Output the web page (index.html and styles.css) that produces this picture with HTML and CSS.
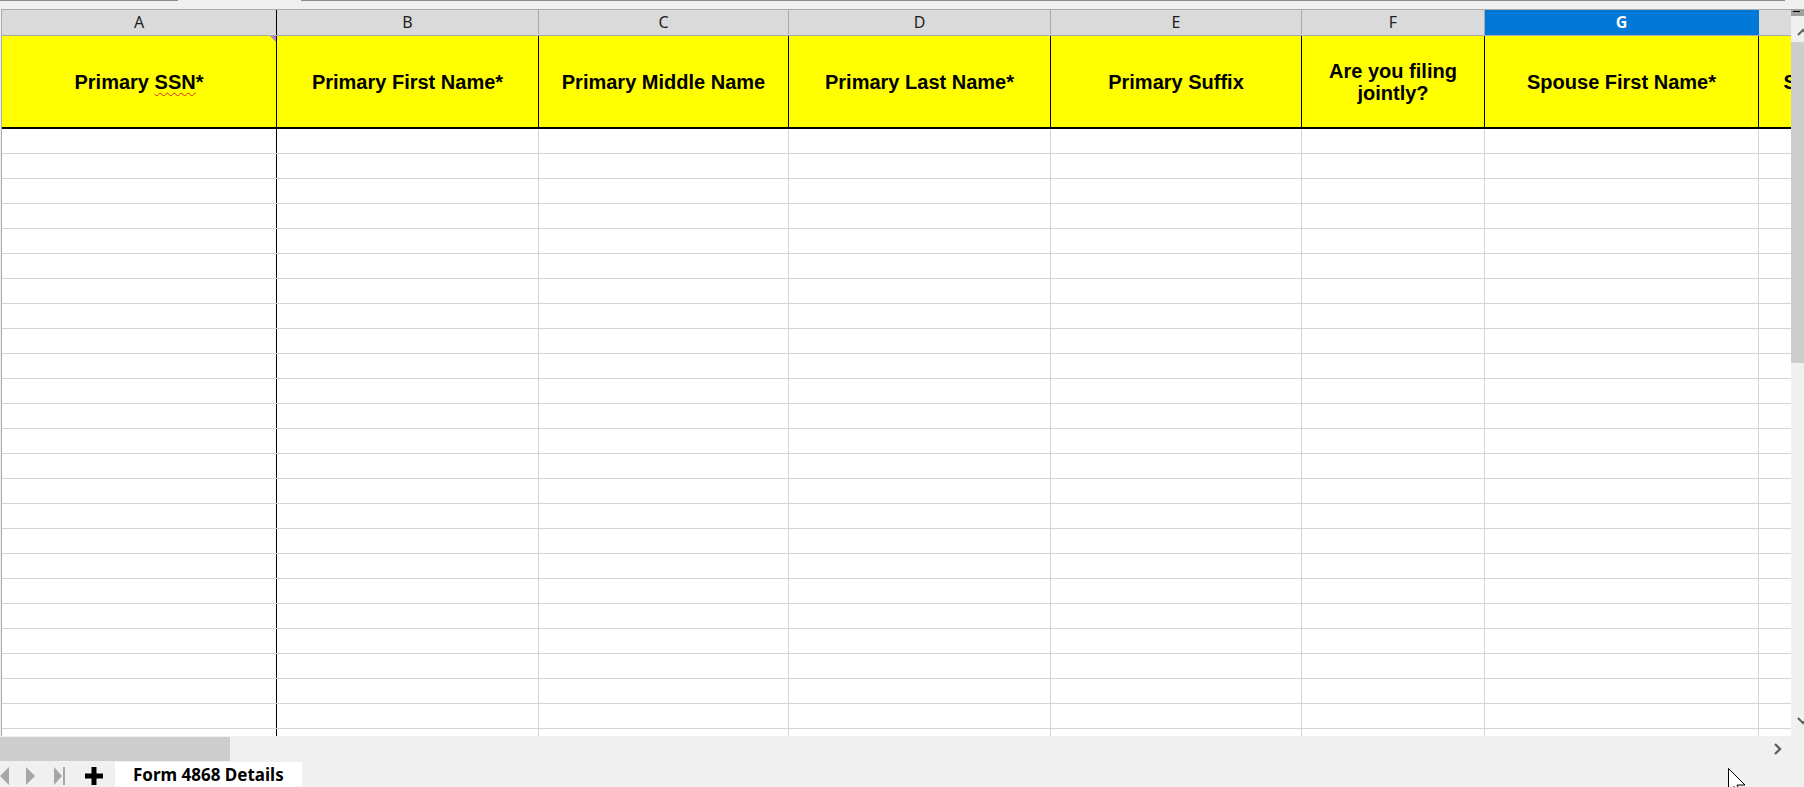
FILE: index.html
```html
<!DOCTYPE html>
<html lang="en">
<head>
<meta charset="utf-8">
<title>Form 4868 Details</title>
<link rel="stylesheet" href="styles.css">
</head>
<body>
<div class="app">
  <div class="topstrip">
    <span class="edge edge-a"></span>
    <span class="edge-gap"></span>
    <span class="edge edge-b"></span>
  </div>

  <div class="main">
    <div class="sheet">
      <div class="colheads cols">
        <span class="frozen">A</span>
        <span>B</span>
        <span>C</span>
        <span>D</span>
        <span>E</span>
        <span>F</span>
        <span class="selected">G</span>
        <span class="last"></span>
      </div>

      <div class="titles cols">
        <div class="title frozen has-note"><span class="label">Primary <span class="misspelled">SSN</span>*</span></div>
        <div class="title"><span class="label">Primary First Name*</span></div>
        <div class="title"><span class="label">Primary Middle Name</span></div>
        <div class="title"><span class="label">Primary Last Name*</span></div>
        <div class="title"><span class="label">Primary Suffix</span></div>
        <div class="title"><span class="label">Are you filing jointly?</span></div>
        <div class="title"><span class="label">Spouse First Name*</span></div>
        <div class="title last"><span class="label clip">Spouse Middle Name</span></div>
      </div>

      <div class="rows">
        <div class="row cols"><i class="frozen"></i><i></i><i></i><i></i><i></i><i></i><i></i><i></i></div>
        <div class="row cols"><i class="frozen"></i><i></i><i></i><i></i><i></i><i></i><i></i><i></i></div>
        <div class="row cols"><i class="frozen"></i><i></i><i></i><i></i><i></i><i></i><i></i><i></i></div>
        <div class="row cols"><i class="frozen"></i><i></i><i></i><i></i><i></i><i></i><i></i><i></i></div>
        <div class="row cols"><i class="frozen"></i><i></i><i></i><i></i><i></i><i></i><i></i><i></i></div>
        <div class="row cols"><i class="frozen"></i><i></i><i></i><i></i><i></i><i></i><i></i><i></i></div>
        <div class="row cols"><i class="frozen"></i><i></i><i></i><i></i><i></i><i></i><i></i><i></i></div>
        <div class="row cols"><i class="frozen"></i><i></i><i></i><i></i><i></i><i></i><i></i><i></i></div>
        <div class="row cols"><i class="frozen"></i><i></i><i></i><i></i><i></i><i></i><i></i><i></i></div>
        <div class="row cols"><i class="frozen"></i><i></i><i></i><i></i><i></i><i></i><i></i><i></i></div>
        <div class="row cols"><i class="frozen"></i><i></i><i></i><i></i><i></i><i></i><i></i><i></i></div>
        <div class="row cols"><i class="frozen"></i><i></i><i></i><i></i><i></i><i></i><i></i><i></i></div>
        <div class="row cols"><i class="frozen"></i><i></i><i></i><i></i><i></i><i></i><i></i><i></i></div>
        <div class="row cols"><i class="frozen"></i><i></i><i></i><i></i><i></i><i></i><i></i><i></i></div>
        <div class="row cols"><i class="frozen"></i><i></i><i></i><i></i><i></i><i></i><i></i><i></i></div>
        <div class="row cols"><i class="frozen"></i><i></i><i></i><i></i><i></i><i></i><i></i><i></i></div>
        <div class="row cols"><i class="frozen"></i><i></i><i></i><i></i><i></i><i></i><i></i><i></i></div>
        <div class="row cols"><i class="frozen"></i><i></i><i></i><i></i><i></i><i></i><i></i><i></i></div>
        <div class="row cols"><i class="frozen"></i><i></i><i></i><i></i><i></i><i></i><i></i><i></i></div>
        <div class="row cols"><i class="frozen"></i><i></i><i></i><i></i><i></i><i></i><i></i><i></i></div>
        <div class="row cols"><i class="frozen"></i><i></i><i></i><i></i><i></i><i></i><i></i><i></i></div>
        <div class="row cols"><i class="frozen"></i><i></i><i></i><i></i><i></i><i></i><i></i><i></i></div>
        <div class="row cols"><i class="frozen"></i><i></i><i></i><i></i><i></i><i></i><i></i><i></i></div>
        <div class="row cols"><i class="frozen"></i><i></i><i></i><i></i><i></i><i></i><i></i><i></i></div>
        <div class="row cols"><i class="frozen"></i><i></i><i></i><i></i><i></i><i></i><i></i><i></i></div>
      </div>
    </div>

    <div class="vscroll">
      <div class="vs-split"><span></span></div>
      <div class="vs-up">
        <svg width="13" height="26" viewBox="0 0 13 26"><polyline points="7,19 12,14 17,19" fill="none" stroke="#606060" stroke-width="2"/></svg>
      </div>
      <div class="vs-thumb"></div>
      <div class="vs-track">
        <svg width="13" height="10" viewBox="0 0 13 10"><polyline points="7,2 12,7 17,2" fill="none" stroke="#606060" stroke-width="2"/></svg>
      </div>
    </div>
  </div>

  <div class="hscroll">
    <div class="hs-thumb"></div>
    <div class="hs-track"></div>
    <svg class="hs-right" width="10" height="12" viewBox="0 0 10 12"><polyline points="2,1 7,6 2,11" fill="none" stroke="#606060" stroke-width="2.4"/></svg>
  </div>

  <div class="tabbar">
    <svg class="tab-nav" width="70" height="25" viewBox="0 0 70 25">
      <polygon points="9,5 0,14 9,23" fill="#a6a6a6"/>
      <polygon points="26,5 35,14 26,23" fill="#a6a6a6"/>
      <polygon points="54,5 62,14 54,23" fill="#a6a6a6"/>
      <rect x="63" y="5" width="2" height="18" fill="#a6a6a6"/>
    </svg>
    <svg class="tab-add" width="18" height="25" viewBox="0 0 18 25">
      <rect x="6.5" y="5" width="5" height="18" fill="#000"/>
      <rect x="0" y="11.5" width="18" height="5" fill="#000"/>
    </svg>
    <div class="tab active">Form 4868 Details</div>
  </div>

  <svg class="pointer" width="20" height="26" viewBox="0 0 20 26">
    <polygon points="0.5,0.5 0.5,24 6,18.5 10,27 13,25.5 9,17 17,17" fill="#fff" stroke="#000" stroke-width="1"/>
  </svg>
</div>
</body>
</html>
```

FILE: styles.css
```css
* {
  box-sizing: border-box;
  margin: 0;
  padding: 0;
}

html,
body {
  width: 1804px;
  height: 787px;
  overflow: hidden;
  background: #f0f0f0;
  font-family: "Liberation Sans", Arial, sans-serif;
}

.app {
  position: relative;
  width: 1804px;
  height: 787px;
  display: flex;
  flex-direction: column;
}

/* thin edge left over from the formula bar above the grid */
.topstrip {
  height: 9px;
  display: flex;
  align-items: flex-start;
}

.edge {
  height: 1px;
  background: #8c8c8c;
}

.edge-a {
  width: 178px;
}

.edge-gap {
  width: 123px;
}

.edge-b {
  width: 1484px;
}

.main {
  height: 727px;
  display: flex;
}

.sheet {
  width: 1790px;
  margin-left: 1px;
  border-left: 1px solid #ababab;
  background: #fff;
  display: flex;
  flex-direction: column;
  overflow: hidden;
}

/* shared column track for every grid row */
.cols {
  display: grid;
  grid-template-columns: 275px 262px 250px 262px 251px 183px 274px 32px;
}

/* column letters */
.colheads {
  height: 27px;
  background: #dadada;
  border-top: 1px solid #ababab;
  border-bottom: 1px solid #ababab;
}

.colheads span {
  border-right: 1px solid #ababab;
  text-align: center;
  font-family: "Noto Sans", "Open Sans", sans-serif;
  font-size: 16px;
  line-height: 25px;
  color: #1e1e1e;
}

.colheads span.frozen {
  border-right-color: #000;
}

.colheads span.selected {
  background: #0078d7;
  color: #fff;
  font-weight: 700;
  border-right-color: #0078d7;
}

.colheads span.last {
  border-right: 0;
}

/* yellow title row */
.titles {
  height: 93px;
  background: #ffff00;
  border-bottom: 2px solid #000;
}

.title {
  position: relative;
  border-right: 1px solid #000;
  display: flex;
  align-items: center;
  justify-content: center;
  text-align: center;
  font-weight: 700;
  font-size: 20px;
  line-height: 22px;
  color: #000;
  padding: 0 14px;
}

.title.last {
  border-right: 0;
  justify-content: flex-start;
  padding: 0;
  overflow: hidden;
}

.title .clip {
  flex: none;
  width: 250px;
  text-align: center;
}

.misspelled {
  text-decoration: underline wavy #e02020;
  text-decoration-thickness: 1px;
  text-underline-offset: 3px;
}

/* comment marker in the corner of A1 */
.has-note::after {
  content: "";
  position: absolute;
  top: 0;
  right: 0;
  border-top: 6px solid #b77fd1;
  border-left: 6px solid transparent;
}

/* data rows */
.rows {
  flex: 1;
  overflow: hidden;
}

.row {
  height: 25px;
  border-bottom: 1px solid #d4d4d4;
}

.row i {
  border-right: 1px solid #d4d4d4;
}

.row i.frozen {
  border-right-color: #000;
}

.row i:last-child {
  border-right: 0;
}

/* vertical scrollbar */
.vscroll {
  width: 13px;
  display: flex;
  flex-direction: column;
  background: #f0f0f0;
  overflow: hidden;
}

.vs-split {
  height: 7px;
  background: #a0a0a0;
  padding: 2px 4px 0 2px;
}

.vs-split span {
  display: block;
  height: 1px;
  background: #000;
}

.vs-up {
  height: 26px;
}

.vs-up svg,
.vs-track svg {
  display: block;
}

.vs-thumb {
  height: 321px;
  background: #cdcdcd;
}

.vs-track {
  flex: 1;
  display: flex;
  flex-direction: column;
  justify-content: flex-end;
  padding-bottom: 10px;
}

/* horizontal scrollbar */
.hscroll {
  height: 26px;
  padding: 1px 0;
  display: flex;
  align-items: stretch;
}

.hs-thumb {
  width: 230px;
  background: #cdcdcd;
}

.hs-track {
  flex: 1;
}

.hs-right {
  align-self: center;
  margin-right: 21px;
}

/* sheet tabs */
.tabbar {
  height: 25px;
  display: flex;
  align-items: stretch;
}

.tab-nav {
  display: block;
  margin-right: 15px;
}

.tab-add {
  display: block;
  margin-right: 12px;
}

.tab {
  width: 187px;
  background: #fff;
  padding: 1px 0 0 18px;
  font-family: "Noto Sans", "Open Sans", sans-serif;
  font-weight: 700;
  font-size: 17px;
  line-height: 23px;
  color: #000;
  white-space: nowrap;
}

/* mouse pointer resting over the tab bar */
.pointer {
  position: absolute;
  left: 1728px;
  top: 768px;
}
```
